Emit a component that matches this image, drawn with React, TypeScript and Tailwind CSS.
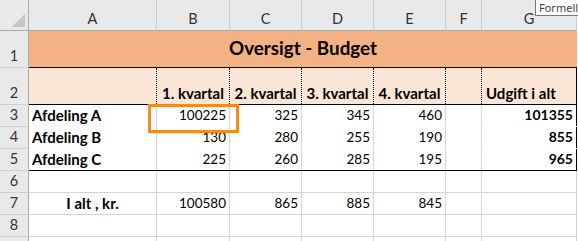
import type { ReactNode } from "react";

// column widths A..G (each includes its 1px right border)
const COLS = ["w-[128px]", "w-[73px]", "w-[72px]", "w-[72px]", "w-[72px]", "w-[36px]", "w-[95px]"];
const LETTERS = ["A", "B", "C", "D", "E", "F", "G"];

type Row = {
  label: string;
  values: (string | number)[];
  total?: number;
  lastBody?: boolean;
};

const rows: Row[] = [
  { label: "Afdeling A", values: [100225, 325, 345, 460], total: 101355 },
  { label: "Afdeling B", values: [130, 280, 255, 190], total: 855 },
  { label: "Afdeling C", values: [225, 260, 285, 195], total: 965, lastBody: true },
];

function RowHead({ n, h }: { n?: number; h: string }) {
  return (
    <div
      className={`${h} w-[29px] shrink-0 flex items-end justify-center pb-[3px] bg-[#e9e9e9] border-r border-b border-r-[#ababab] border-b-[#d0d0d0] text-[14.5px] leading-[16px] text-[#333]`}
    >
      {n}
    </div>
  );
}

function Cell({ w, className, children }: { w: string; className?: string; children?: ReactNode }) {
  return (
    <div className={`${w} shrink-0 h-full flex items-end pb-[3px] leading-[16px] whitespace-nowrap ${className ?? ""}`}>
      {children}
    </div>
  );
}

function DottedLine() {
  return <div className="w-0 h-full border-l border-dotted border-black" />;
}

export default function App() {
  return (
    <div className="relative w-[578px] h-[241px] overflow-hidden bg-white text-black font-['Lato',sans-serif] text-[13.5px]">
      {/* column letters */}
      <div className="flex h-[31px]">
        <div className="w-[29px] shrink-0 relative bg-[#e9e9e9] border-r border-b border-[#ababab]">
          <svg className="absolute left-[12px] top-[14px]" width="13" height="13" viewBox="0 0 13 13">
            <polygon points="13,0 13,13 0,13" fill="#c4c4c4" />
          </svg>
        </div>
        {LETTERS.map((l, i) => (
          <div
            key={l}
            className={`${COLS[i]} shrink-0 flex items-end justify-center pb-[3px] bg-[#e9e9e9] border-r border-b border-r-[#cdcdcd] border-b-[#ababab] text-[14.5px] leading-[16px] text-[#333]`}
          >
            {l}
          </div>
        ))}
      </div>

      {/* row 1: merged title */}
      <div className="flex h-[37px]">
        <RowHead n={1} h="h-[37px]" />
        <div className="w-[548px] shrink-0 flex items-end justify-center pb-[7px] bg-[#f4b183] border-b border-black text-[18.8px] leading-[24px] font-bold">
          Oversigt - Budget
        </div>
      </div>

      {/* row 2: quarter headings */}
      <div className="flex h-[37px]">
        <RowHead n={2} h="h-[37px]" />
        <div className="flex w-[548px] shrink-0 bg-[#fbe5d6] border-b border-r border-black font-bold text-[15px]">
          <Cell w="w-[127px]" />
          <DottedLine />
          {["1. kvartal", "2. kvartal", "3. kvartal", "4. kvartal"].map((q, i) => (
            <div key={q} className="contents">
              <Cell w={i === 0 ? "w-[72px]" : "w-[71px]"} className="justify-center">
                {q}
              </Cell>
              <DottedLine />
            </div>
          ))}
          <Cell w="w-[35px]" />
          <DottedLine />
          <Cell w="w-[93px]" className="pl-[4px]">
            Udgift i alt
          </Cell>
        </div>
      </div>

      {/* rows 3-5: departments */}
      {rows.map((r, idx) => (
        <div key={r.label} className="flex h-[22px]">
          <RowHead n={idx + 3} h="h-[22px]" />
          <div className={`flex w-[548px] shrink-0 border-b ${r.lastBody ? "border-black" : "border-white"}`}>
            <Cell w={COLS[0]} className="pl-[3px] font-bold text-[15px] border-r border-[#d4d4d4]">
              {r.label}
            </Cell>
            {r.values.map((v, i) => (
              <Cell key={i} w={COLS[i + 1]} className="justify-end pr-[3px] border-r border-[#d4d4d4]">
                {v}
              </Cell>
            ))}
            <Cell w={COLS[5]} className="border-r border-[#d4d4d4]" />
            <Cell w={COLS[6]} className="justify-end pr-[3px] font-bold text-[14px] border-r border-black">
              {r.total}
            </Cell>
          </div>
        </div>
      ))}

      {/* row 6: empty */}
      <div className="flex h-[22px]">
        <RowHead n={6} h="h-[22px]" />
        {COLS.map((w, i) => (
          <Cell key={i} w={w} className="border-r border-b border-[#d4d4d4]" />
        ))}
      </div>

      {/* row 7: totals */}
      <div className="flex h-[22px]">
        <RowHead n={7} h="h-[22px]" />
        <Cell w={COLS[0]} className="justify-center font-bold text-[15px] border-r border-b border-[#d4d4d4]">
          I alt , kr.
        </Cell>
        {[100580, 865, 885, 845].map((v, i) => (
          <Cell key={i} w={COLS[i + 1]} className="justify-end pr-[3px] border-r border-b border-[#d4d4d4]">
            {v}
          </Cell>
        ))}
        <Cell w={COLS[5]} className="border-r border-b border-[#d4d4d4]" />
        <Cell w={COLS[6]} className="border-r border-b border-[#d4d4d4]" />
      </div>

      {/* row 8 and the top of row 9 */}
      <div className="flex h-[22px]">
        <RowHead n={8} h="h-[22px]" />
        {COLS.map((w, i) => (
          <Cell key={i} w={w} className="border-r border-b border-[#d4d4d4]" />
        ))}
      </div>
      <div className="flex h-[22px]">
        <RowHead h="h-[22px]" />
        {COLS.map((w, i) => (
          <Cell key={i} w={w} className="border-r border-b border-[#d4d4d4]" />
        ))}
      </div>

      {/* active cell B3 */}
      <div className="absolute left-[148px] top-[104px] w-[91px] h-[29px] border-[3px] border-[#f58a1f]" />

      {/* screen tip */}
      <div className="absolute left-[535px] top-[-1px] w-[48px] h-[17px] pl-[3px] bg-white border border-[#767676] text-[11px] leading-[15px] text-[#444] font-['Noto_Sans',sans-serif] whitespace-nowrap">
        Formell
      </div>
    </div>
  );
}
